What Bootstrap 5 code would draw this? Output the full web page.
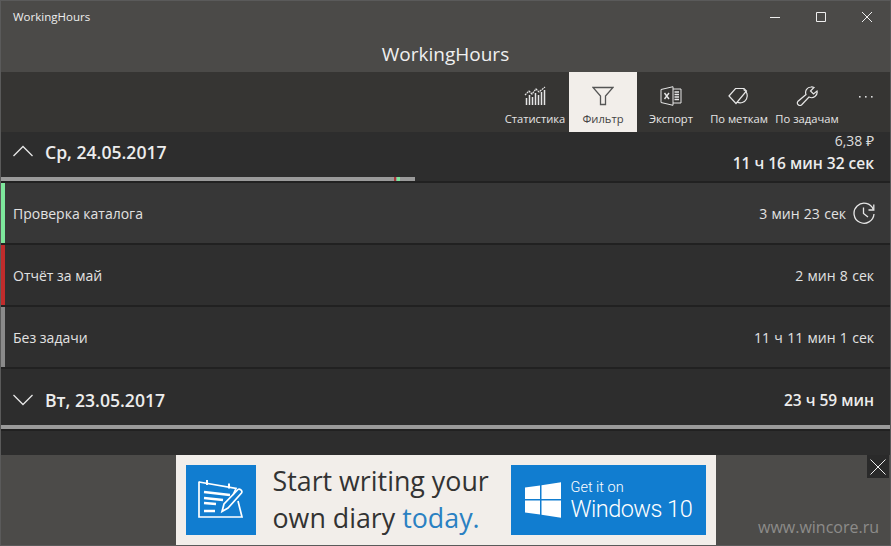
<!DOCTYPE html>
<html lang="ru">
<head>
<meta charset="utf-8">
<title>WorkingHours</title>
<link href="https://cdn.jsdelivr.net/npm/bootstrap@5.3.0/dist/css/bootstrap.min.css" rel="stylesheet">
<style>
html,body{margin:0;height:546px;overflow:hidden;background:#2d2d2d}
body{font-family:"Open Sans","Liberation Sans",sans-serif;color:#e6e6e6}
.wh-win{height:546px;border:1px solid #5a5a5a;position:relative}
.wh-titlebar{height:31px;background:#4b4a48;font-size:11.5px;color:#eee;padding-left:12px}
.wh-ctl{width:46px;height:31px;color:#eee}
.wh-heading{height:40px;background:#4b4a48;font-size:19px;color:#f0f0f0;line-height:44px;text-align:center}
.wh-toolbar{height:60px;background:#363533}
.wh-tool{width:68px;height:60px;padding:0;border:0;border-radius:0;color:#e6e6e6;background:transparent;font-size:11.2px;line-height:14px;white-space:nowrap}
.wh-tool svg{display:block;margin:14px 0 6px;color:#e6e6e6}
.wh-tool.wh-active{background:#f2eeea;color:#444}
.wh-tool.wh-active svg{color:#555}
.wh-more{width:49px;height:60px;color:#ddd}
.wh-dayhead{height:45px;background:#2d2d2d;padding:0 16px 5px 12px}
.wh-dayhead2{height:56px;padding:6px 16px 0 12px}
.wh-chev{margin-bottom:3px}
.wh-daytitle{font-size:17.6px;font-weight:600;color:#ececec;margin-left:12px;line-height:24px}
.wh-sum{font-size:15.5px;font-weight:600;line-height:26px;color:#ececec}
.wh-money{font-size:14px;line-height:18px;color:#ddd}
.wh-bar{height:4px;background:transparent}
.wh-gray{background:#9a9a9a}
.wh-red{background:#a53a3a}
.wh-green{background:#7ee79c}
.wh-gap{height:2px;background:#212121}
.wh-row{height:60px;background:#2f2f2f;font-size:14px;line-height:22px;padding-right:16px;color:#e2e2e2}
.wh-row-hover{background:#373737}
.wh-accent{width:4px;height:60px;margin-right:8px}
.wh-ared{background:#c02c2c}
.wh-agray{background:#8a8a8a}
.wh-clock{margin-left:7px;margin-right:-1px}
.wh-rowtext{padding-top:1px}
.wh-time{padding-top:1px;word-spacing:.7px}
.wh-rest{height:24px;background:#2d2d2d}
.wh-adstrip{height:90px;background:#4c4b49}
.wh-banner{width:540px;height:90px;background:#f2eeea;padding:10px}
.wh-square{width:70px;height:70px;background:#117dd0}
.wh-adtext{width:255px;padding-left:17px;margin-top:-3px;font-size:26.8px;line-height:37px;color:#333;white-space:nowrap}
.wh-adblue{color:#2a80c2}
.wh-store{width:195px;height:70px;background:#117dd0;color:#fff;padding-left:14px}
.wh-storetext{margin-left:10px;padding-top:3px;font-family:Roboto,"Open Sans",sans-serif;font-weight:300}
.wh-store1{font-size:14.5px;line-height:17px}
.wh-store2{font-size:23.5px;line-height:27.6px;letter-spacing:-.53px}
.wh-close{position:absolute;right:1px;top:454px;width:22px;height:23px;background:#2a2a2a;color:#eee}
.wh-mark{position:absolute;right:11px;bottom:8px;font-size:16px;color:#8d8c8a;line-height:20px}
</style>
</head>
<body>
<div class="wh-win d-flex flex-column">
  <div class="wh-titlebar d-flex align-items-center justify-content-between">
    <span>WorkingHours</span>
    <div class="d-flex">
      <div class="wh-ctl d-flex align-items-center justify-content-center"><svg width="12" height="12" viewBox="0 0 12 12"><path d="M1 6.5H11" stroke="currentColor" fill="none"/></svg></div>
      <div class="wh-ctl d-flex align-items-center justify-content-center"><svg width="12" height="12" viewBox="0 0 12 12"><path d="M1.5 1.5H10.5V10.5H1.5Z" stroke="currentColor" fill="none"/></svg></div>
      <div class="wh-ctl d-flex align-items-center justify-content-center"><svg width="12" height="12" viewBox="0 0 12 12"><path d="M1 1L11 11M11 1L1 11" stroke="currentColor" fill="none"/></svg></div>
    </div>
  </div>
  <div class="wh-heading">WorkingHours</div>
  <div class="wh-toolbar d-flex justify-content-end">
    <button class="btn wh-tool d-flex flex-column align-items-center"><svg width="22" height="20" viewBox="0 0 22 20" fill="none" stroke="currentColor"><path d="M1 9L5 5L8 8L12 3L15 6L21 1" stroke-width="1.2" stroke-dasharray="2 .7"/><path d="M2.5 19V12M5.5 19V9M8.5 19V11M11.5 19V7M14.5 19V9M17.5 19V6M20.5 19V4" stroke-width="1.5"/></svg>Статистика</button>
    <button class="btn wh-tool wh-active d-flex flex-column align-items-center"><svg width="22" height="20" viewBox="0 0 22 20" fill="none" stroke="currentColor" stroke-width="1.3"><path d="M1 1.5H21L13.5 10V18.5H8.5V10Z"/></svg>Фильтр</button>
    <button class="btn wh-tool d-flex flex-column align-items-center"><svg width="22" height="20" viewBox="0 0 22 20" fill="none" stroke="currentColor"><path d="M1 3.5L13 .7V19.3L1 16.5ZM13 3H21V17H13"/><path d="M4.5 7L9 13M9 7L4.5 13" stroke-width="1.4"/><path d="M14.5 6H19M14.5 8.5H19M14.5 11H19M14.5 13.5H19" stroke-width="1.3"/></svg>Экспорт</button>
    <button class="btn wh-tool d-flex flex-column align-items-center"><svg width="22" height="20" viewBox="0 0 22 20" fill="none" stroke="currentColor" stroke-width="1.2"><path d="M1 10L7.5 2.5H16L18.5 5L8 17.5Z"/><path d="M15.5 3.5A6.7 6.7 0 1 1 9 16"/></svg>По меткам</button>
    <button class="btn wh-tool d-flex flex-column align-items-center"><svg width="22" height="20" viewBox="0 0 22 20" fill="none" stroke="currentColor" stroke-width="1.2"><path d="M15 1A5.5 5.5 0 0 0 10 8.5L1.8 15.5A2.6 2.6 0 0 0 5.5 19L13 11A5.5 5.5 0 0 0 21 5L17.5 8L14.5 5L18 1.5A5.5 5.5 0 0 0 15 1Z"/></svg>По задачам</button>
    <div class="wh-more d-flex justify-content-center"><svg width="16" height="60" viewBox="0 0 16 60"><g fill="currentColor"><rect x="1" y="24" width="1.6" height="1.6"/><rect x="7" y="24" width="1.6" height="1.6"/><rect x="13" y="24" width="1.6" height="1.6"/></g></svg></div>
  </div>

  <div class="wh-dayhead d-flex align-items-center justify-content-between">
    <div class="d-flex align-items-center">
      <svg class="wh-chev" width="20" height="12" viewBox="0 0 20 12" fill="none" stroke="#e6e6e6" stroke-width="1.3"><path d="M.5 11L10 1.5L19.5 11"/></svg>
      <span class="wh-daytitle">Ср, 24.05.2017</span>
    </div>
    <div class="text-end align-self-start"><div class="wh-money">6,38 ₽</div><div class="wh-sum">11 ч 16 мин 32 сек</div></div>
  </div>
  <div class="wh-bar d-flex">
    <div class="wh-gray" style="width:393px"></div><div class="wh-red" style="width:2px"></div><div class="wh-gray" style="width:1px"></div><div class="wh-green" style="width:3px"></div><div class="wh-gray" style="width:15px"></div>
  </div>
  <div class="wh-gap"></div>

  <div class="wh-row wh-row-hover d-flex align-items-center">
    <div class="wh-accent wh-green"></div><span class="flex-grow-1 wh-rowtext">Проверка каталога</span><span class="wh-time">3 мин 23 сек</span>
    <svg class="wh-clock" width="22" height="22" viewBox="0 0 22 22" fill="none" stroke="#e6e6e6" stroke-width="1.3"><path d="M20.3 7.5A10 10 0 1 0 21 12"/><path d="M20.8 2.5V8H15.5"/><path d="M10.5 5.5V11.5L15 15"/></svg>
  </div>
  <div class="wh-gap"></div>
  <div class="wh-row d-flex align-items-center">
    <div class="wh-accent wh-ared"></div><span class="flex-grow-1 wh-rowtext">Отчёт за май</span><span class="wh-time">2 мин 8 сек</span>
  </div>
  <div class="wh-gap"></div>
  <div class="wh-row d-flex align-items-center">
    <div class="wh-accent wh-agray"></div><span class="flex-grow-1 wh-rowtext">Без задачи</span><span class="wh-time">11 ч 11 мин 1 сек</span>
  </div>
  <div class="wh-gap"></div>

  <div class="wh-dayhead wh-dayhead2 d-flex align-items-center justify-content-between">
    <div class="d-flex align-items-center">
      <svg width="20" height="12" viewBox="0 0 20 12" fill="none" stroke="#e6e6e6" stroke-width="1.3"><path d="M.5 1L10 10.5L19.5 1"/></svg>
      <span class="wh-daytitle">Вт, 23.05.2017</span>
    </div>
    <div class="wh-sum">23 ч 59 мин</div>
  </div>
  <div class="wh-bar wh-gray"></div>
  <div class="wh-gap"></div>
  <div class="wh-rest"></div>

  <div class="wh-adstrip d-flex justify-content-center">
    <div class="wh-banner d-flex">
      <div class="wh-square d-flex align-items-center justify-content-center">
        <svg width="46" height="40" viewBox="0 0 46 40" fill="none" stroke="#fff" stroke-width="1.7"><path d="M1 1.5V37H44L40 21"/><path d="M1 2L38 8.5L35 15"/><path d="M9 0V5M31 3.5V8.5" stroke-width="2"/><path d="M6 12L32 15M6 18L25 20M6 23L18 24M6 31H17" stroke-width="2.4"/><path d="M24 31.5L26 24L40 9.5C41.5 8 45 11 43.5 13L30 28Z" stroke-width="1.7"/></svg>
      </div>
      <div class="wh-adtext">Start writing your<br>own diary <span class="wh-adblue">today.</span></div>
      <div class="wh-store d-flex align-items-center">
        <svg width="36" height="36" viewBox="0 0 36 36" fill="#fff"><path d="M0 5.5L15 3.4V17H0ZM16.5 3.2L36 .3V17H16.5ZM0 18.5H15V32.4L0 30.4ZM16.5 18.5H36V35.7L16.5 32.8Z"/></svg>
        <div class="wh-storetext"><div class="wh-store1">Get it on</div><div class="wh-store2">Windows 10</div></div>
      </div>
    </div>
  </div>
  <div class="wh-close d-flex align-items-center justify-content-center"><svg width="16" height="16" viewBox="0 0 16 16"><path d="M.5 .5L15.5 15.5M15.5 .5L.5 15.5" stroke="currentColor" fill="none"/></svg></div>
  <div class="wh-mark">www.wincore.ru</div>
</div>
<script src="https://cdn.jsdelivr.net/npm/bootstrap@5.3.0/dist/js/bootstrap.bundle.min.js"></script>
</body>
</html>
